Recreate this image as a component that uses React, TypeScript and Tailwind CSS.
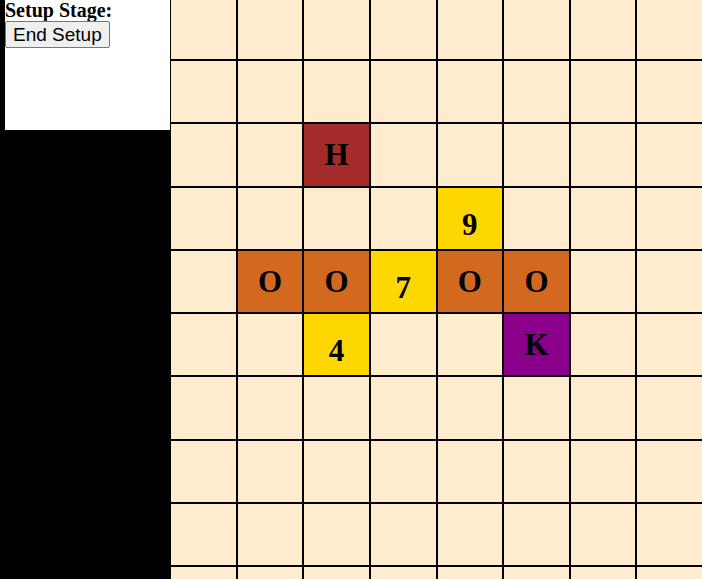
const COLS = 8;
const ROWS = 10;

type Piece = { label: string; kind: 'brown' | 'orange' | 'gold' | 'purple' };

// row-col -> piece on the board
const pieces: Record<string, Piece> = {
  '2-2': { label: 'H', kind: 'brown' },
  '3-4': { label: '9', kind: 'gold' },
  '4-1': { label: 'O', kind: 'orange' },
  '4-2': { label: 'O', kind: 'orange' },
  '4-3': { label: '7', kind: 'gold' },
  '4-4': { label: 'O', kind: 'orange' },
  '4-5': { label: 'O', kind: 'orange' },
  '5-2': { label: '4', kind: 'gold' },
  '5-5': { label: 'K', kind: 'purple' },
};

const kindBg: Record<Piece['kind'], string> = {
  brown: 'bg-[#a52a2a]',
  orange: 'bg-[#d2691e]',
  gold: 'bg-[#ffd700]',
  purple: 'bg-[#8b008b]',
};

function Cell({ piece }: { piece?: Piece }) {
  if (!piece) return <div className="bg-[#ffebcd]" />;
  const isDigit = /\d/.test(piece.label);
  return (
    <div
      className={`${kindBg[piece.kind]} flex items-center justify-center text-[31px] font-bold text-black leading-none ${isDigit ? 'pt-[12px]' : ''}`}
    >
      {piece.label}
    </div>
  );
}

export default function App() {
  const cells = [];
  for (let r = 0; r < ROWS; r++) {
    for (let c = 0; c < COLS; c++) {
      cells.push(<Cell key={`${r}-${c}`} piece={pieces[`${r}-${c}`]} />);
    }
  }

  return (
    <div className="flex h-screen overflow-hidden bg-black font-['Liberation_Serif',serif]">
      {/* Side panel */}
      <div className="w-[170px] shrink-0">
        <div className="ml-[5px] h-[130px] bg-white">
          <div className="text-[20px] font-bold leading-[21px] text-black">Setup Stage:</div>
          <button className="h-[27px] rounded-[2px] border border-[#767676] bg-[#efefef] px-[7px] font-['Liberation_Sans',sans-serif] text-[19px] leading-none text-black">
            End Setup
          </button>
        </div>
      </div>

      {/* Board */}
      <div className="flex-1 pl-px">
        <div className="grid grid-cols-8 grid-rows-[59px_repeat(9,61.3px)] gap-[2px]">{cells}</div>
      </div>
    </div>
  );
}
